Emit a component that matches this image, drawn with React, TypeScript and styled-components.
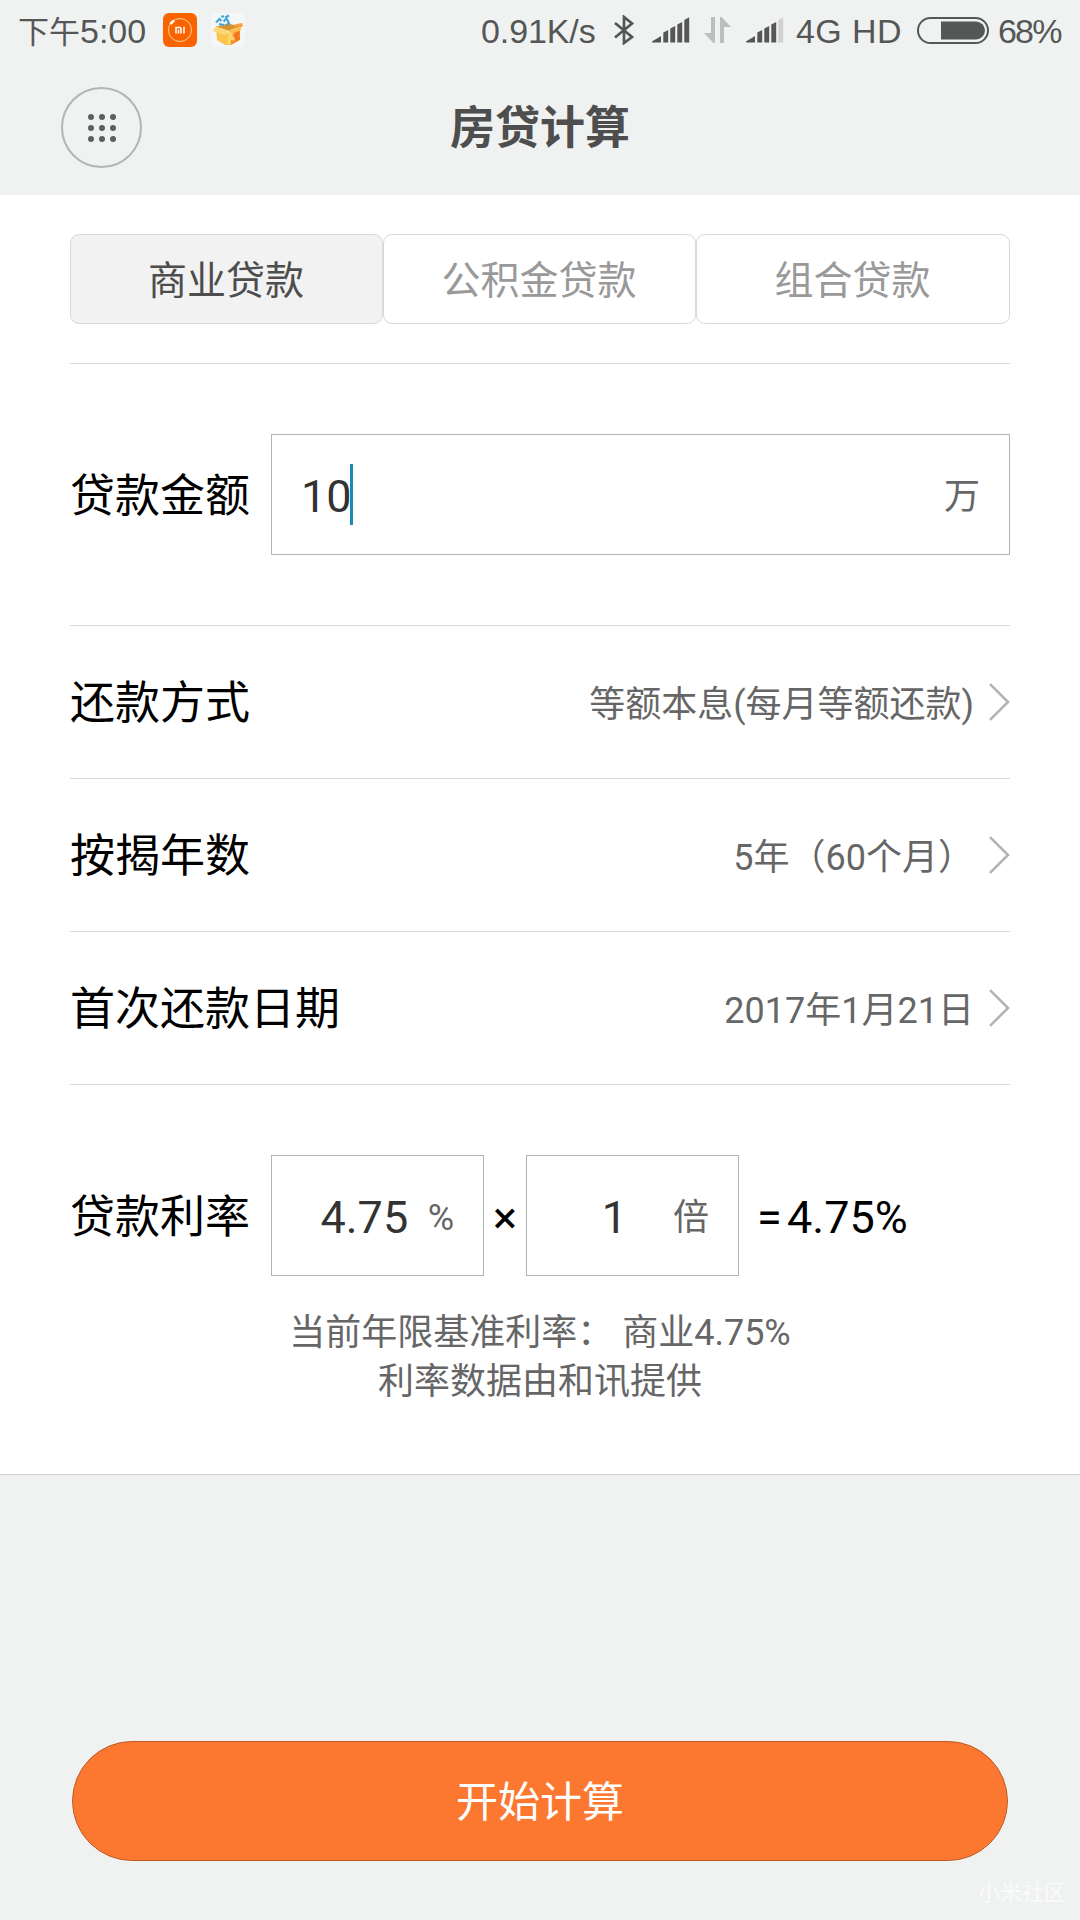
import React from "react";
import styled, { createGlobalStyle } from "styled-components";

const GlobalStyle = createGlobalStyle`
  * { box-sizing: border-box; }
  body { margin: 0; background: #f0f2f1; }
`;

const Screen = styled.div`
  position: relative;
  width: 1080px;
  height: 1920px;
  display: flex;
  flex-direction: column;
  background: #f0f2f1;
  font-family: Roboto, "Noto Sans CJK SC", sans-serif;
  overflow: hidden;
`;

const StatusBar = styled.div`
  height: 60px;
  padding: 0 18px;
  display: flex;
  align-items: center;
  justify-content: space-between;
  font-family: "Liberation Sans", "Noto Sans CJK SC", sans-serif;
  font-size: 34px;
  line-height: 60px;
  color: #555756;
  white-space: nowrap;
`;

const StatusGroup = styled.div`
  display: flex;
  align-items: center;
  height: 60px;
`;

const StatusText = styled.span<{ $width: number; $gap?: number; $tracking?: number }>`
  display: block;
  width: ${(p) => p.$width}px;
  margin-right: ${(p) => p.$gap ?? 0}px;
  letter-spacing: ${(p) => p.$tracking ?? 0}px;
  height: 60px;
  padding-top: 1px;
`;

const Period = styled.span`
  font-size: 31px;
`;

const StatusIcon = styled.svg<{ $gap: number }>`
  display: block;
  flex: none;
  margin-right: ${(p) => p.$gap}px;
`;

const NavBar = styled.header`
  height: 135px;
  padding: 0 61px;
  display: grid;
  grid-template-columns: 81px 1fr 81px;
  align-items: center;
`;

const MenuButton = styled.button`
  width: 81px;
  height: 81px;
  padding: 0;
  border: 2px solid #b3b5b4;
  border-radius: 50%;
  background: transparent;
  display: flex;
  align-items: center;
  justify-content: center;
`;

const Title = styled.h1`
  margin: 0;
  padding-top: 3px;
  text-align: center;
  font-size: 45px;
  line-height: 60px;
  font-weight: 700;
  color: #4d4e4d;
`;

const Panel = styled.main`
  height: 1280px;
  padding: 39px 70px 0;
  background: #fff;
  border-bottom: 1px solid #cfcfcf;
`;

const Tabs = styled.div`
  display: grid;
  grid-template-columns: 313px 313px 314px;
  height: 129px;
  padding-bottom: 39px;
`;

const Tab = styled.button<{ $active?: boolean }>`
  padding: 3px 1px 0 0;
  border: 1px solid #d9d9d9;
  border-radius: 9px;
  background: ${(p) => (p.$active ? "#f2f2f2" : "#fff")};
  color: ${(p) => (p.$active ? "#4d4d4d" : "#999")};
  font: inherit;
  font-size: 39px;
  line-height: 56px;
`;

const Section = styled.section<{ $height: number }>`
  height: ${(p) => p.$height}px;
  border-top: 1px solid #d9d9d9;
  display: flex;
  align-items: center;
`;

const Label = styled.div`
  width: 201px;
  flex: none;
  padding-top: 4px;
  white-space: nowrap;
  font-size: 45px;
  line-height: 60px;
  color: #000;
`;

const Field = styled.div<{ $width: number }>`
  width: ${(p) => p.$width}px;
  height: 121px;
  flex: none;
  padding: 0 29px;
  border: 1px solid #b3b3b3;
  display: flex;
  align-items: center;
`;

const FieldValue = styled.div<{ $centered?: boolean }>`
  flex: 1;
  display: flex;
  align-items: center;
  justify-content: ${(p) => (p.$centered ? "center" : "flex-start")};
  font-size: 45px;
  line-height: 61px;
  color: #333;
`;

const Digits = styled.span`
  padding-top: 4px;
`;

const Caret = styled.span`
  width: 3px;
  height: 61px;
  background: #1a8ab5;
  margin-left: -2px;
`;

const Unit = styled.span`
  padding-top: 4px;
  font-size: 36px;
  line-height: 54px;
  color: #666;
`;

const OptionValue = styled.div`
  margin-left: auto;
  margin-right: 15px;
  padding-top: 5px;
  font-size: 36px;
  line-height: 54px;
  color: #666;
  white-space: nowrap;
`;

const RateSection = styled.section`
  border-top: 1px solid #d9d9d9;
  padding-top: 70px;
`;

const RateRow = styled.div`
  display: flex;
  align-items: center;
`;

const Operator = styled.span<{ $width: number }>`
  width: ${(p) => p.$width}px;
  padding-top: 4px;
  text-align: center;
  font-size: 45px;
  line-height: 60px;
  color: #000;
`;

const Equals = styled.span`
  width: 48px;
  padding: 4px 0 0 18px;
  font-size: 45px;
  line-height: 60px;
  color: #000;
`;

const Result = styled.span`
  padding-top: 4px;
  font-size: 45px;
  line-height: 60px;
  color: #000;
`;

const Note = styled.p`
  margin: 33px 0 0;
  text-align: center;
  font-size: 36px;
  line-height: 49px;
  color: #666;
`;

const Footer = styled.footer`
  flex: 1;
  padding: 266px 72px 0;
`;

const SubmitButton = styled.button`
  display: block;
  width: 936px;
  height: 120px;
  padding: 4px 0 0;
  border: 1px solid #bd5c28;
  border-radius: 60px;
  background: #fc772f;
  color: #fff;
  font: inherit;
  font-size: 42px;
  line-height: 60px;
`;

const Watermark = styled.span`
  position: absolute;
  right: 14px;
  bottom: 11px;
  font-size: 22px;
  line-height: 32px;
  color: #fafbfb;
`;

const MiIcon = () => (
  <StatusIcon $gap={14} width="34" height="34" viewBox="0 0 34 34">
    <rect width="34" height="34" rx="6" fill="#fa6400" />
    <circle cx="17" cy="17" r="11.5" fill="none" stroke="#ffd9b8" strokeWidth="0.9" />
    <path d="M7.5 11.5 L11 8" stroke="#fa6400" strokeWidth="6" />
    <path d="M7.3 11 L11 7.3" stroke="#fff" strokeWidth="2.6" />
    <path d="M13 20.5 V14.5 H16.5 Q18 14.5 18 16 V20.5 M15.5 16.8 V20.5 M21 13.8 V20.5" fill="none" stroke="#fff" strokeWidth="1.5" />
  </StatusIcon>
);

const BoxIcon = () => (
  <StatusIcon $gap={0} width="34" height="34" viewBox="0 0 34 34">
    <rect width="34" height="34" rx="6" fill="#f4f7f8" />
    <path d="M5 15 L17 20 L17 32 L14 32 L6 27 Z" fill="#fbc54d" />
    <path d="M29 15 L17 20 L17 32 L20 32 L29 27 Z" fill="#f98a2b" />
    <path d="M5 13.5 L17 10.5 L29 13.5 L17 18 Z" fill="#d8932f" />
    <path d="M1.5 18 L5 13.5 L17 17.5 L14.5 22 Z" fill="#fdd877" />
    <path d="M17 17.5 L29 13.5 L30.5 17 L20 21 Z" fill="#fdbb50" />
    <path d="M17 19 V32 L20 31.5 V26.5 L22.5 28 L24 25 L21.5 23 L22 20 Z" fill="#fcd56a" />
    <path d="M24 20 L27 18.5 L29 20.5 L27 23 L29 26 L26 28 L23.5 25 Z" fill="#f4741f" />
    <path d="M23 11.5 L31 10 L32 13 L29.5 14.5 Z" fill="#fb9d3a" />
    <path d="M5 9.5 L8.5 6 L10.5 8 M8 11 L13 12 M10 3.5 H13 M14 4.5 L18 2.5 M12.5 8.5 L15.5 5.5 L18 10 L15 12.5" fill="none" stroke="#45a3dc" strokeWidth="2.1" />
  </StatusIcon>
);

const BluetoothIcon = () => (
  <StatusIcon $gap={17} width="22" height="30" viewBox="0 0 22 30">
    <path d="M2 8 L19 22 L11 28 V2 L19 8.5 L2 22.5" fill="none" stroke="#555756" strokeWidth="2.7" />
  </StatusIcon>
);

const SignalIcon = ({ weak, gap }: { weak?: boolean; gap: number }) => (
  <StatusIcon $gap={gap} width="38" height="26" viewBox="0 0 38 26" fill="#555756">
    <path d="M0 25.5 V24.5 L9 19 V25.5 Z" />
    <path d="M11.3 25.5 V15.5 L16.2 13 V25.5 Z" />
    <path d="M18.3 25.5 V11.5 L23.2 9 V25.5 Z" />
    <path d="M25.3 25.5 V7.5 L30.2 5 V25.5 Z" />
    <path d="M32.3 25.5 V3 L37.2 0.3 V25.5 Z" fill={weak ? "#d0d2d1" : "#555756"} />
  </StatusIcon>
);

const TransferIcon = () => (
  <StatusIcon $gap={15} width="27" height="26" viewBox="0 0 27 26" fill="#bcbebd">
    <path d="M7 0 H11 V26 H9.5 L0 16 H7 Z" />
    <path d="M16 0 H17.5 L27 10 H20 V26 H16 Z" />
  </StatusIcon>
);

const BatteryIcon = () => (
  <StatusIcon $gap={9} width="72" height="27" viewBox="0 0 72 27">
    <rect x="1" y="1" width="70" height="25" rx="12.5" fill="none" stroke="#555756" strokeWidth="2" />
    <path d="M24 4.5 H59 A9 9 0 0 1 59 22.5 H24 Z" fill="#555756" />
  </StatusIcon>
);

const Dots = () => (
  <svg width="28" height="28" viewBox="0 0 28 28" fill="#5d5f5e">
    {[3, 14, 25].map((y) =>
      [3, 14, 25].map((x) => <circle key={`${x}-${y}`} cx={x} cy={y} r="3" />)
    )}
  </svg>
);

const Chevron = () => (
  <svg width="21" height="38" viewBox="0 0 21 38" fill="none" stroke="#b3b3b3" strokeWidth="2.6">
    <path d="M1 1.2 L19 19 L1 36.8" />
  </svg>
);

const options = [
  { label: "还款方式", value: "等额本息(每月等额还款)" },
  { label: "按揭年数", value: "5年（60个月）" },
  { label: "首次还款日期", value: "2017年1月21日" },
];

export default function App() {
  return (
    <Screen>
      <GlobalStyle />
      <StatusBar>
        <StatusGroup>
          <StatusText $width={145}>
            <Period>下午</Period>5:00
          </StatusText>
          <MiIcon />
          <BoxIcon />
        </StatusGroup>
        <StatusGroup>
          <StatusText $width={115} $gap={17} $tracking={-0.1}>0.91K/s</StatusText>
          <BluetoothIcon />
          <SignalIcon gap={14} />
          <TransferIcon />
          <SignalIcon gap={12} weak />
          <StatusText $width={105} $gap={16} $tracking={0.4}>4G HD</StatusText>
          <BatteryIcon />
          <StatusText $width={64} $tracking={-1.8}>68%</StatusText>
        </StatusGroup>
      </StatusBar>
      <NavBar>
        <MenuButton aria-label="菜单">
          <Dots />
        </MenuButton>
        <Title>房贷计算</Title>
      </NavBar>
      <Panel>
        <Tabs>
          <Tab $active>商业贷款</Tab>
          <Tab>公积金贷款</Tab>
          <Tab>组合贷款</Tab>
        </Tabs>
        <Section $height={262}>
          <Label>贷款金额</Label>
          <Field $width={739}>
            <FieldValue>
              <Digits>10</Digits>
              <Caret />
            </FieldValue>
            <Unit>万</Unit>
          </Field>
        </Section>
        {options.map((o) => (
          <Section $height={153} key={o.label}>
            <Label>{o.label}</Label>
            <OptionValue>{o.value}</OptionValue>
            <Chevron />
          </Section>
        ))}
        <RateSection>
          <RateRow>
            <Label>贷款利率</Label>
            <Field $width={213}>
              <FieldValue $centered>
                <Digits>4.75</Digits>
              </FieldValue>
              <Unit>%</Unit>
            </Field>
            <Operator $width={42}>×</Operator>
            <Field $width={213}>
              <FieldValue $centered>
                <Digits>1</Digits>
              </FieldValue>
              <Unit>倍</Unit>
            </Field>
            <Equals>=</Equals>
            <Result>4.75%</Result>
          </RateRow>
          <Note>
            当前年限基准利率： 商业4.75%
            <br />
            利率数据由和讯提供
          </Note>
        </RateSection>
      </Panel>
      <Footer>
        <SubmitButton>开始计算</SubmitButton>
      </Footer>
      <Watermark>小米社区</Watermark>
    </Screen>
  );
}
